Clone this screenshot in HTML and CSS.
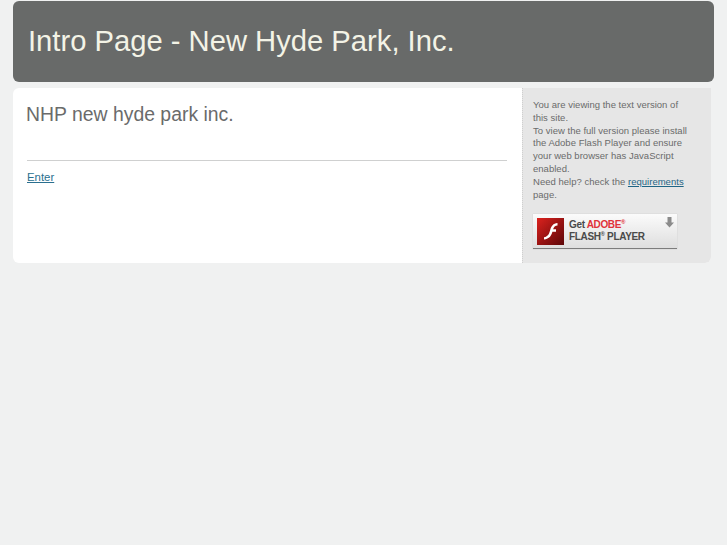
FILE: index.html
```
<!DOCTYPE html>
<html lang="en">
<head>
<meta charset="utf-8">
<title>Intro Page - New Hyde Park, Inc.</title>
<link rel="stylesheet" href="styles.css">
</head>
<body>
<div class="page">
  <header class="banner"><h1>Intro Page - New Hyde Park, Inc.</h1></header>
  <div class="panel">
    <main class="main">
      <h2>NHP new hyde park inc.</h2>
      <hr class="rule">
      <a class="enter" href="#">Enter</a>
    </main>
    <aside class="side">
      <p class="note">You are viewing the text version of this site.<br>To view the full version please install the Adobe Flash Player and ensure your web browser has JavaScript enabled.<br>Need help? check the <a class="req" href="#">requirements</a> page.</p>
      <a class="flash" href="#">
        <svg class="flash-logo" width="27" height="27" viewBox="0 0 27 27" aria-hidden="true">
          <defs><linearGradient id="fg" x1="0" y1="0" x2="1" y2="1"><stop offset="0" stop-color="#dc221e"/><stop offset="1" stop-color="#5c0608"/></linearGradient></defs>
          <rect width="27" height="27" fill="url(#fg)"/>
          <path d="M20.500 5c-4.500.3-6.200 3.200-7.300 7-1 3.500-2 6.700-6.200 7.200v2.300c5.500-.5 7.300-3.800 8.400-7.700h3.600v-2.500h-2.900c.8-2.200 1.900-3.500 4.400-3.700z" fill="#fff"/>
        </svg>
        <span class="flash-text"><span class="flash-line">Get <span class="adobe">ADOBE<sup>®</sup></span></span><span class="flash-line">FLASH<sup>®</sup> PLAYER</span></span>
        <svg class="flash-arrow" width="9" height="11" viewBox="0 0 9 11" aria-hidden="true"><path d="M2.500 0h4v5.500h2.500L4.500 10.500 0 5.500h2.500z" fill="#8b8b8b"/></svg>
      </a>
    </aside>
  </div>
</div>
</body>
</html>
```
FILE: styles.css
```
* { box-sizing: border-box; }
html, body { margin: 0; height: 100%; }
body {
  background: #f0f1f1;
  font-family: "Liberation Sans", Arial, sans-serif;
  color: #6a6b6b;
}
.page { padding: 1px 13px 0; }
.banner {
  width: 701px;
  height: 81px;
  background: #686a69;
  border-radius: 6px;
  display: flex;
  align-items: center;
  padding: 0 15px;
}
h1 {
  margin: 0;
  font-size: 29.2px;
  font-weight: 400;
  color: #f3f3e6;
}
.panel {
  margin-top: 6px;
  width: 698px;
  height: 175px;
  display: flex;
  background: #fff;
  border-radius: 6px 0 6px 6px;
  overflow: hidden;
}
.main { width: 509px; padding: 14px 15px 0 13px; }
h2 {
  margin: 0;
  font-size: 19.4px;
  line-height: 24px;
  font-weight: 400;
  color: #6a6b6b;
}
.rule {
  margin: 34px 0 0 1px;
  border: 0;
  height: 1px;
  background: #cfd0d0;
}
.enter {
  display: inline-block;
  margin: 9px 0 0 1px;
  font-size: 11.4px;
  line-height: 14px;
  color: #2a6f8f;
}
.side {
  width: 189px;
  background: #e6e6e6;
  border-left: 1px dotted #cfcfcf;
  padding: 11px 10px 0 10px;
}
.note {
  margin: 0;
  width: 158px;
  font-size: 9.5px;
  letter-spacing: 0.02px;
  line-height: 12.8px;
  color: #6a6b6b;
}
.req { color: #1f6585; }
.flash {
  margin-top: 13px;
  display: flex;
  align-items: center;
  width: 144px;
  height: 35px;
  padding: 0 0 0 4px;
  position: relative;
  background: linear-gradient(#fbfbfb, #dedede);
  border-bottom: 1px solid #7c7c7c;
  box-shadow: 0 0 1px #bbb;
  text-decoration: none;
}
.flash-logo { flex: none; }
.flash-text {
  margin-left: 5px;
  display: flex;
  flex-direction: column;
  font-size: 10px;
  line-height: 12px;
  font-weight: 700;
  letter-spacing: -0.35px;
  color: #4a4a4a;
  white-space: nowrap;
}
.flash-line { display: block; }
.adobe { color: #e0333a; }
sup { font-size: 6px; line-height: 0; }
.flash-arrow { position: absolute; right: 3px; top: 3px; }
```
